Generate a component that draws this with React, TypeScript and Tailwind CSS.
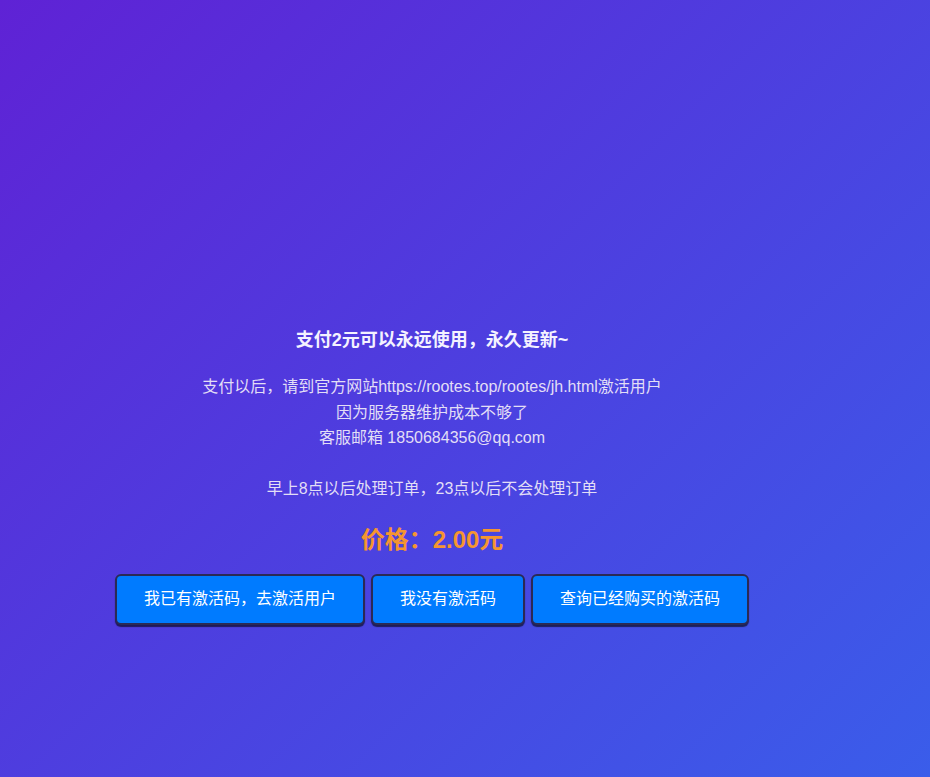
import React from "react";

export default function App() {
  const font = "font-['Liberation_Sans','Noto_Sans_CJK_SC',sans-serif]";
  const btn =
    "h-[51px] px-[27px] rounded-[6px] border-2 border-[#2b2a55] bg-[#007bff] text-white text-[16px] shadow-[0_2px_1px_rgba(0,0,0,0.6)]";
  return (
    <div
      className={`min-h-[777px] w-full bg-[linear-gradient(135deg,#5f22d5_0%,#3a5dea_100%)] ${font}`}
    >
      <div className="w-[864px] flex flex-col items-center pt-[329px]">
        <h1 className="text-[18px] leading-[22px] font-bold text-[#f4f2ff]">
          支付2元可以永远使用，永久更新~
        </h1>
        <p className="mt-[23px] text-[16px] leading-[25.6px] text-[#e2def6] text-center">
          支付以后，请到官方网站https://rootes.top/rootes/jh.html激活用户
          <br />
          因为服务器维护成本不够了
          <br />
          客服邮箱 1850684356@qq.com
          <br />
          <br />
          早上8点以后处理订单，23点以后不会处理订单
        </p>
        <div className="mt-[23px] text-[24px] leading-[30px] font-bold text-[#f5952f]">
          价格：2.00元
        </div>
        <div className="mt-[19px] flex gap-[6px]">
          <button className={btn}>我已有激活码，去激活用户</button>
          <button className={btn}>我没有激活码</button>
          <button className={btn}>查询已经购买的激活码</button>
        </div>
      </div>
    </div>
  );
}
